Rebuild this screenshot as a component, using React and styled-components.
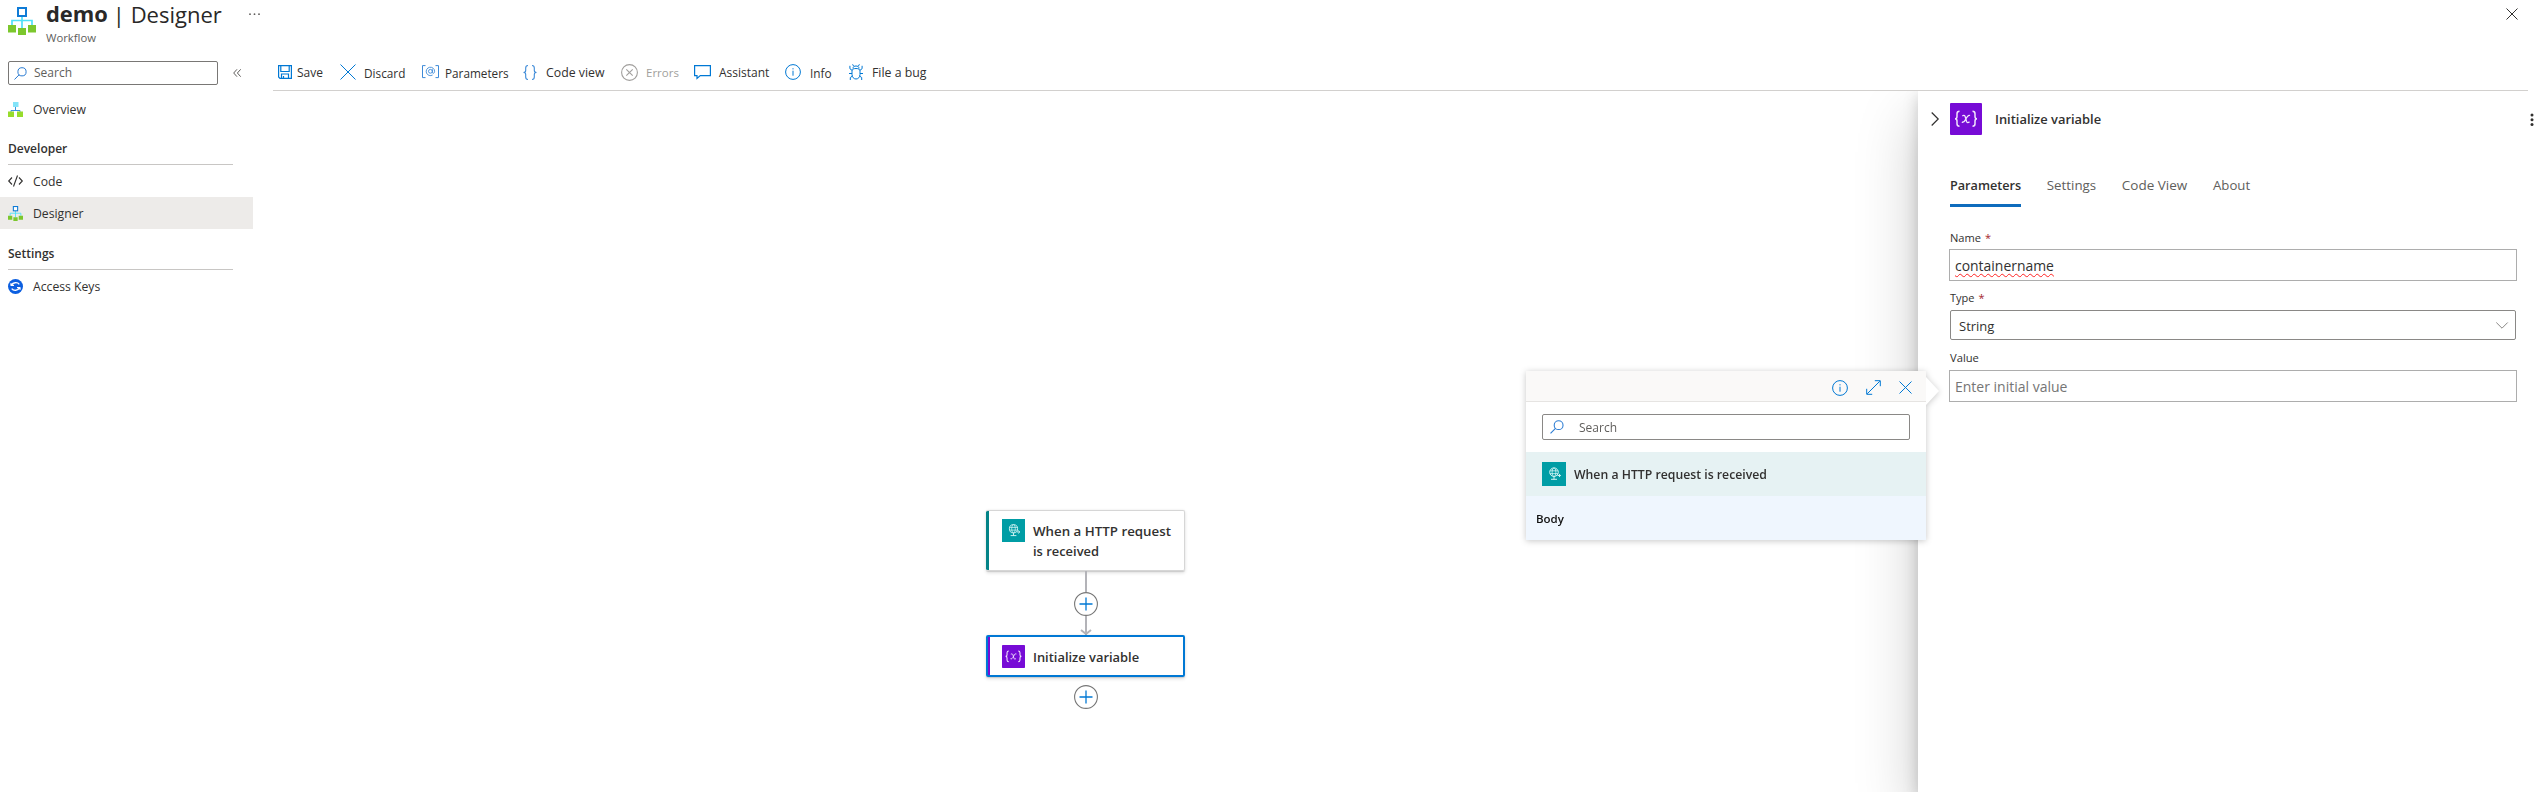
import React from 'react';
import styled, { createGlobalStyle } from 'styled-components';

const Global = createGlobalStyle`
  * { box-sizing: border-box; }
  body { margin: 0; background: #fff; overflow: hidden; }
  body, input { font-family: "Open Sans", "Noto Sans", sans-serif; }
  svg { display: block; flex: none; overflow: visible; }
`;

const Text = styled.span`
  font-size: ${p => p.$size || 12.2}px;
  font-weight: ${p => p.$weight || 400};
  color: ${p => p.$color || '#323130'};
  line-height: ${p => p.$line || 16}px;
  white-space: nowrap;
`;

const Page = styled.div`
  height: 792px;
  display: flex;
  flex-direction: column;
  background: #fff;
`;
const Header = styled.header`
  height: 53px;
  display: flex;
  align-items: flex-start;
  padding: 0 29px 0 8px;
`;
const HeaderIcon = styled.div`padding-top: 7px; width: 38px;`;
const Titles = styled.div`display: flex; flex-direction: column; width: 203px;`;
const TitleLine = styled.div`
  height: 30px;
  display: flex;
  gap: 5px;
  align-items: center;
  padding-bottom: 2px;
`;
const CloseSlot = styled.div`margin-left: auto; padding-top: 8px;`;
const DotsSlot = styled.div`padding-top: 13px;`;

const Body = styled.div`flex: 1; display: flex; min-height: 0;`;
const Sidebar = styled.nav`
  width: 253px;
  padding-top: 8px;
  display: flex;
  flex-direction: column;
  flex: none;
`;
const SearchRow = styled.div`
  display: flex;
  align-items: center;
  gap: 15px;
  margin: 0 0 8px 8px;
`;
const SideSearch = styled.div`
  width: 210px;
  height: 24px;
  border: 1px solid #797775;
  border-radius: 2px;
  display: flex;
  align-items: center;
  gap: 7px;
  padding-left: 5px;
`;
const NavItem = styled.div`
  height: 32px;
  padding: 2px 0 0 8px;
  display: flex;
  align-items: center;
  background: ${p => (p.$active ? '#edebe9' : 'transparent')};
`;
const NavIcon = styled.div`width: 25px; padding-bottom: 2px;`;
const NavHeading = styled.div`
  height: ${p => p.$height}px;
  margin: 0 20px 0 8px;
  border-bottom: 1px solid #c8c6c4;
  display: flex;
  align-items: flex-end;
  padding-bottom: 7px;
`;

const Main = styled.main`flex: 1; display: flex; flex-direction: column; min-width: 0;`;
const Toolbar = styled.div`
  height: 38px;
  margin: 0 19px 0 20px;
  padding-left: 5px;
  border-bottom: 1px solid #d2d0ce;
  display: flex;
  align-items: center;
`;
const Tool = styled.div`width: ${p => p.$width}px; display: flex; align-items: center; padding-top: 3px;`;
const ToolIcon = styled.div`
  width: ${p => p.$slot}px;
  height: 20px;
  display: flex;
  align-items: center;
  padding-bottom: 2px;
`;

const Canvas = styled.section`
  flex: 1;
  position: relative;
  overflow: hidden;
  display: flex;
  justify-content: flex-end;
`;
const Flow = styled.div`
  position: absolute;
  left: 733px;
  top: 419px;
  width: 199px;
  display: flex;
  flex-direction: column;
  align-items: center;
`;
const Card = styled.div`
  width: 199px;
  height: ${p => p.$height}px;
  display: flex;
  align-items: flex-start;
  gap: 8px;
  padding: ${p => (p.$selected ? '8px 0 0 11px' : '8px 0 0 12px')};
  border: ${p => (p.$selected ? '2px solid #0078d4' : '1px solid #d6d6d6')};
  ${p => !p.$selected && 'border-left: 0;'}
  border-radius: 2px;
  background: linear-gradient(to right, ${p => p.$accent} ${p => (p.$selected ? 2 : 3.5)}px, #fff 0);
  box-shadow: 0 1.6px 3.6px rgba(0,0,0,.13), 0 .3px .9px rgba(0,0,0,.11);
`;
const CardTile = styled.div`margin-left: ${p => p.$shift || 0}px;`;
const CardText = styled.div`display: flex; flex-direction: column; padding-top: 2px;`;
const TrailingAdd = styled.div`padding-top: 8px;`;

const Panel = styled.aside`
  width: 629px;
  background: #fff;
  position: relative;
  box-shadow: 0 25.6px 57.6px rgba(0,0,0,.22), 0 4.8px 14.4px rgba(0,0,0,.18);
  padding: 12px 13px 0 13px;
`;
const PanelHead = styled.div`height: 32px; display: flex; align-items: center;`;
const ChevronSlot = styled.div`width: 19px;`;
const PanelTitle = styled.div`margin-left: 13px; padding-bottom: 1px; flex: 1; display: flex;`;
const Tabs = styled.div`display: flex; gap: 25.7px; padding: 39px 0 0 19px;`;
const Tab = styled.div`
  height: 33px;
  display: flex;
  align-items: flex-start;
  padding-top: 3px;
  border-bottom: 3px solid ${p => (p.$active ? '#0f6cbd' : 'transparent')};
`;
const Form = styled.div`padding: 23px 17px 0 18px;`;
const Label = styled.div`
  height: ${p => p.$height}px;
  display: flex;
  align-items: flex-start;
  gap: 4px;
  padding: ${p => p.$top || 0}px 0 0 1px;
`;
const Field = styled.div`
  height: 32px;
  border: 1px solid #adadad;
  display: flex;
  align-items: center;
  padding: 1px 0 0 5px;
`;
const Select = styled.div`
  height: 30px;
  margin: 0 1px;
  border: 1px solid #8a8886;
  border-radius: 2px;
  display: flex;
  align-items: center;
  justify-content: space-between;
  padding: 1px 7px 0 8px;
`;
const Misspelled = styled(Text)`
  text-decoration: underline wavy #f22 1.3px;
  text-underline-offset: 2px;
  text-decoration-skip-ink: none;
`;

const Popup = styled.div`
  position: absolute;
  left: 1273px;
  top: 280px;
  width: 400px;
  height: 169px;
  background: #fff;
  filter: drop-shadow(0 1px 3px rgba(0,0,0,.22));
`;
const PopupBeak = styled.i`
  position: absolute;
  right: -13px;
  top: 6px;
  width: 13px;
  height: 28px;
  background: #fff;
  clip-path: polygon(0 0, 100% 50%, 0 100%);
`;
const PopupBar = styled.div`
  height: 31px;
  background: #faf9f8;
  border-bottom: 1px solid #e6e4e2;
  display: flex;
  align-items: center;
  justify-content: flex-end;
  gap: 18px;
  padding: 3px 14px 0 0;
`;
const PopupSearch = styled.div`
  height: 26px;
  margin: 12px 16px;
  border: 1px solid #8a8886;
  border-radius: 2px;
  display: flex;
  align-items: center;
  gap: 15px;
  padding-left: 7px;
  & > span { padding-top: 1px; }
`;
const PopupRow = styled.div`
  height: 44px;
  display: flex;
  align-items: center;
  gap: 8px;
  padding: ${p => p.$pad};
  background: ${p => p.$bg};
  & > span { padding-top: 2px; }
`;

const Line = ({ w = 16, h = w, box = `0 0 ${w} ${h}`, color = '#0078d4', sw = 1, children }) => (
  <svg width={w} height={h} viewBox={box} fill="none" stroke={color} strokeWidth={sw}>{children}</svg>
);
const Cross = ({ size, color, sw }) => (
  <Line w={size} color={color} sw={sw}><path d={`M.5.5 ${size - 0.5} ${size - 0.5}M${size - 0.5}.5.5 ${size - 0.5}`} /></Line>
);
const Magnifier = ({ size = 13 }) => (
  <Line w={size} box="0 0 13 13" color="#2b7cd3"><circle cx="8" cy="4.8" r="4.1" /><path d="M5.1 7.8.5 12.5" /></Line>
);
const InfoIcon = () => (
  <Line w={16}><circle cx="8" cy="8" r="7.4" /><path d="M8 6.7v5M8 4.2v1.2" /></Line>
);
const Hierarchy = ({ size }) => (
  <svg width={size} height={size} viewBox="0 0 28 28">
    <path d="M14 9v12M4 18v-4.5h20V18" fill="none" stroke="#50e0f8" strokeWidth="1.7" />
    <rect x="10" y="1" width="8" height="8" fill="#fff" stroke="#0f7bd6" strokeWidth="2" />
    <path d="M0 18h8v7.500H0zM10 21h8v7h-8zM20 18h8v7.500h-8z" fill="#7cc72d" />
  </svg>
);
const OverviewIcon = () => (
  <svg width="15" height="15" viewBox="0 0 15 15">
    <path d="M7.500 5v3.500M3 10V8.500h9V10" fill="none" stroke="#3d93dd" />
    <path d="M5 0h5.500v5H5z" fill="#83e3f8" />
    <path d="M0 9.500h6V15H0zM9 9.500h6V15H9z" fill="#97dc2c" />
  </svg>
);
const KeysIcon = () => (
  <svg width="15" height="15" viewBox="0 0 15 15" fill="none" stroke="#fff" strokeWidth="1.3">
    <circle cx="7.500" cy="7.500" r="7.500" fill="#0c5fe0" stroke="none" />
    <path d="M3 6.700V4.200M3 6.300h3M3.600 6C4.800 3.300 9.500 2.900 11.300 5.300M12 8.300v2.500M12 8.700H9M11.400 9C10.200 11.700 5.500 12.100 3.700 9.700" />
  </svg>
);
const SaveIcon = () => (
  <Line w={14} sw={1.2}><path d="M.6.600h12.800v12.800H2L.6 12zM2.800.600v5.900h8.400V.6M3.500 13.400V9h7v4.400M5.500 11v2.400" /></Line>
);
const AtIcon = () => (
  <Line w={17} h={14} color="#3d8ad8">
    <path d="M3.500.6h-3v12h3M13.500.600h3v12h-3" />
    <circle cx="8.400" cy="6.300" r="1.900" strokeWidth=".9" />
    <path d="M10.400 4.300v3c0 1.700 2.200 1.300 2.200-1a4.200 4.200 0 1 0-2 3.700" strokeWidth=".9" />
  </Line>
);
const BracesIcon = () => (
  <Line w={14} h={15} color="#3d8ad8" sw={1.1}>
    <path d="M5 .5C3 .5 2.700 1.200 2.700 3v2.500c0 1.300-.7 2-2.200 2 1.500 0 2.200.7 2.200 2V12c0 1.800.3 2.500 2.300 2.500M9 .5c2 0 2.300.7 2.300 2.500v2.500c0 1.300.7 2 2.200 2-1.500 0-2.200.7-2.200 2V12c0 1.800-.3 2.500-2.300 2.500" />
  </Line>
);
const ErrorsIcon = () => (
  <Line w={17} color="#a19f9d" sw={1.1}><circle cx="8.500" cy="8.500" r="7.900" /><path d="m5.300 5.300 6.400 6.400m0-6.400-6.400 6.400" /></Line>
);
const ChatIcon = () => (
  <Line w={17} h={14} sw={1.2}><path d="M.6.600h15.800v10H6.300L3 13.400v-2.800H.6z" /></Line>
);
const BugIcon = () => (
  <Line w={14} h={16} sw={1}>
    <path d="M4 4.500C4 2.800 5.200 2 7 2s3 .8 3 2.500M4.700 2.300 3.600.3M9.300 2.300l1.100-2M3 7C3 5.300 4.500 4.500 7 4.500S11 5.300 11 7v3.500c0 2.600-1.800 4.500-4 4.500s-4-1.900-4-4.500zM3 6.300.9 4.700V1.800M11 6.300l2.100-1.600V1.800M3 9.500H0M11 9.500h3M3.500 12 1.300 13.500V16M10.500 12l2.200 1.500V16" />
  </Line>
);
const CodeIcon = () => (
  <Line w={15} h={12} color="#323130" sw={1.1}><path d="M4 2.500.7 6 4 9.500M11 2.500 14.300 6 11 9.500M9.500.5l-4 11" /></Line>
);
const CollapseIcon = () => (
  <Line w={8} h={8} color="#605e5c"><path d="M4 .3.700 4 4 7.700M7.700.3 4.400 4l3.300 3.700" /></Line>
);
const ExpandIcon = () => (
  <Line w={15}><path d="M1.200 13.800 13.800 1.200M8.800.700h5.500v5.500M.7 8.800v5.500h5.500" /></Line>
);
const RequestIcon = ({ size }) => (
  <svg width={size} height={size} viewBox="0 0 24 24" fill="none" stroke="#cdf2f2" strokeWidth="1">
    <rect width="24" height="24" fill="#009da5" stroke="none" />
    <circle cx="12" cy="10.200" r="4.300" />
    <ellipse cx="12" cy="10.200" rx="1.900" ry="4.300" strokeWidth=".8" />
    <path d="M8 8.800h8M8 11.600h8" strokeWidth=".8" />
    <path d="M12 14.500v3M9 17.300h6M15.500 13.500h3M17 12l1.600 1.500L17 15" />
  </svg>
);
const VariableIcon = ({ size }) => (
  <svg width={size} height={size} viewBox="0 0 32 32" fill="none" stroke="#f1e4fc" strokeWidth="1.500">
    <rect width="32" height="32" rx="1" fill="#770bd6" stroke="none" />
    <path d="M9.500 8.300C7.500 8.300 7 9 7 10.800v2.700c0 1.500-.6 2.300-2 2.300 1.400 0 2 .8 2 2.300v2.700c0 1.800.5 2.500 2.500 2.500M22.500 8.300c2 0 2.500.7 2.500 2.500v2.700c0 1.500.6 2.300 2 2.300-1.400 0-2 .8-2 2.300v2.700c0 1.800-.5 2.500-2.500 2.500" />
    <path d="M12.300 12.800c2-1 2.700-.3 3.300 2.200l.9 3.200c.5 1.600 1.600 1.800 3 .5M20 12.500c-1.500-.7-2.500.2-4 3.300-1.500 3-2.600 4-4.200 3.300" strokeWidth="1.300" />
  </svg>
);
const AddButton = () => (
  <Line w={24} color="#767676" sw={1.1}>
    <circle cx="12" cy="12" r="11.400" fill="#fff" />
    <path d="M12 5.500v13M5.500 12h13" stroke="#0078d4" strokeWidth="1.300" />
  </Line>
);
const Connector = ({ h, arrow }) => (
  <Line w={12} h={h} color="#b3b3b8" sw={2}>
    <path d={`M6 0v${h}`} />
    {arrow && <path d={`M1 ${h - 5}l5 4 5-4`} />}
  </Line>
);

const tools = [
  ['Save', <SaveIcon />, 19, 62, 12],
  ['Discard', <Cross size={16} />, 24, 82, 11.8],
  ['Parameters', <AtIcon />, 23, 101, 11.75],
  ['Code view', <BracesIcon />, 23, 98, 12.3],
  ['Errors', <ErrorsIcon />, 25, 73, 11.5],
  ['Assistant', <ChatIcon />, 25, 91, 12],
  ['Info', <InfoIcon />, 25, 64, 11.8],
  ['File a bug', <BugIcon />, 23, 90, 12.3],
];

function Nav({ icon, label, active }) {
  return <NavItem $active={active}><NavIcon>{icon}</NavIcon><Text>{label}</Text></NavItem>;
}

export default function App() {
  return (
    <Page>
      <Global />
      <Header>
        <HeaderIcon><Hierarchy size={28} /></HeaderIcon>
        <Titles>
          <TitleLine>
            <Text $size={21.9} $weight={700} $line={28} $color="#292827">demo</Text>
            <Text $size={22} $line={28} $color="#292827">| Designer</Text>
          </TitleLine>
          <Text $size={11.3} $color="#605e5c">Workflow</Text>
        </Titles>
        <DotsSlot>
          <svg width="12" height="3" fill="#605e5c"><circle cx="1" cy="1.200" r=".9" /><circle cx="5.500" cy="1.200" r=".9" /><circle cx="10" cy="1.200" r=".9" /></svg>
        </DotsSlot>
        <CloseSlot><Cross size={12} color="#323130" /></CloseSlot>
      </Header>
      <Body>
        <Sidebar>
          <SearchRow>
            <SideSearch><Magnifier /><Text $size={12} $color="#605e5c">Search</Text></SideSearch>
            <CollapseIcon />
          </SearchRow>
          <Nav icon={<OverviewIcon />} label="Overview" />
          <NavHeading $height={40}><Text $size={12} $weight={600}>Developer</Text></NavHeading>
          <Nav icon={<CodeIcon />} label="Code" />
          <Nav icon={<Hierarchy size={15} />} label="Designer" active />
          <NavHeading $height={41}><Text $size={12} $weight={600}>Settings</Text></NavHeading>
          <Nav icon={<KeysIcon />} label="Access Keys" />
        </Sidebar>
        <Main>
          <Toolbar>
            {tools.map(([label, icon, slot, width, size]) => (
              <Tool key={label} $width={width}>
                <ToolIcon $slot={slot}>{icon}</ToolIcon>
                <Text $size={size} $color={label === 'Errors' ? '#a19f9d' : undefined}>{label}</Text>
              </Tool>
            ))}
          </Toolbar>
          <Canvas>
            <Flow>
              <Card $height={61} $accent="#038387">
                <CardTile $shift={4}><RequestIcon size={23} /></CardTile>
                <CardText>
                  <Text $size={13.3} $weight={600} $line={20}>When a HTTP request</Text>
                  <Text $size={12.9} $weight={600} $line={20}>is received</Text>
                </CardText>
              </Card>
              <Connector h={21} />
              <AddButton />
              <Connector h={19} arrow />
              <Card $height={42} $accent="#770bd6" $selected>
                <CardTile $shift={3}><VariableIcon size={23} /></CardTile>
                <CardText><Text $size={12.9} $weight={600} $line={20}>Initialize variable</Text></CardText>
              </Card>
              <TrailingAdd><AddButton /></TrailingAdd>
            </Flow>
            <Panel>
              <PanelHead>
                <ChevronSlot><Line w={8} h={14} color="#323130" sw={1.2}><path d="M.7.500 7.200 7 .7 13.500" /></Line></ChevronSlot>
                <VariableIcon size={32} />
                <PanelTitle><Text $size={12.9} $weight={600}>Initialize variable</Text></PanelTitle>
                <svg width="4" height="13" fill="#323130"><circle cx="2" cy="2" r="1.500" /><circle cx="2" cy="6.700" r="1.500" /><circle cx="2" cy="11.500" r="1.500" /></svg>
              </PanelHead>
              <Tabs>
                <Tab $active><Text $size={12.65} $weight={600}>Parameters</Text></Tab>
                <Tab><Text $size={13.3} $color="#605e5c">Settings</Text></Tab>
                <Tab><Text $size={13.5} $color="#605e5c">Code View</Text></Tab>
                <Tab><Text $size={13.2} $color="#605e5c">About</Text></Tab>
              </Tabs>
              <Form>
                <Label $height={19}><Text $size={11.1}>Name</Text><Text $size={11} $color="#a4262c">*</Text></Label>
                <Field><Misspelled $size={13.95}>containername</Misspelled></Field>
                <Label $height={29} $top={9}><Text $size={11}>Type</Text><Text $size={11} $color="#a4262c">*</Text></Label>
                <Select>
                  <Text $size={13}>String</Text>
                  <Line w={12} h={7} color="#8a8886"><path d="M.3.500 6 6.200 11.700.5" /></Line>
                </Select>
                <Label $height={30} $top={10}><Text $size={11.2}>Value</Text></Label>
                <Field><Text $size={14} $color="#757575">Enter initial value</Text></Field>
              </Form>
            </Panel>
            <Popup>
              <PopupBeak />
              <PopupBar><InfoIcon /><ExpandIcon /><Cross size={13} /></PopupBar>
              <PopupSearch><Magnifier size={14} /><Text $size={12} $color="#605e5c">Search</Text></PopupSearch>
              <PopupRow $bg="#e6f2f3" $pad="0 0 0 16px">
                <RequestIcon size={24} />
                <Text $size={12.25} $weight={600}>When a HTTP request is received</Text>
              </PopupRow>
              <PopupRow $bg="#eff6fe" $pad="0 0 0 10px"><Text $size={11.5} $weight={600} $color="#111">Body</Text></PopupRow>
            </Popup>
          </Canvas>
        </Main>
      </Body>
    </Page>
  );
}
